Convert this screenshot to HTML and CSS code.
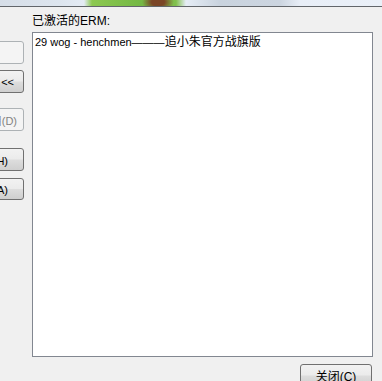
FILE: index.html
```html
<!DOCTYPE html>
<html lang="zh-CN">
<head>
  <meta charset="UTF-8">
  <title>ERM</title>
  <link rel="stylesheet" href="styles.css">
</head>
<body>

  <div class="banner"></div>

  <div class="main">
    <div class="side">
      <button class="btn btn-first" disabled>添加(I) &gt;&gt;</button>
      <button class="btn btn-back">&lt;&lt;</button>
      <button class="btn btn-dis" disabled>禁用(D)</button>
      <button class="btn btn-help">帮助(H)</button>
      <button class="btn btn-all">全部(A)</button>
    </div>

    <div class="content">
      <div class="label">已激活的ERM:</div>
      <div class="list">
        <div class="item">29 wog - henchmen———<span class="cjk">追小朱官方战旗版</span></div>
      </div>
      <div class="footer">
        <button class="btn btn-close">关闭(C)</button>
      </div>
    </div>
  </div>

</body>
</html>
```

FILE: styles.css
```css
* {
  margin: 0;
  padding: 0;
  box-sizing: border-box;
}

body {
  width: 382px;
  height: 381px;
  overflow: hidden;
  background: #f0f0f0;
  font-family: 'Liberation Sans', 'Noto Sans CJK SC', sans-serif;
  font-size: 11px;
  color: #000;
}

/* Bande d'image en haut */
.banner {
  height: 7px;
  border-bottom: 1px solid #62666b;
  background:
    radial-gradient(ellipse 16px 10px at 158px 2px, #7a4526 40%, rgba(122, 69, 38, 0) 100%),
    linear-gradient(90deg, rgba(0,0,0,0) 84px, #8cc850 92px, #74b844 140px, #80c04c 176px, rgba(0,0,0,0) 186px),
    linear-gradient(90deg, #d6dee8 0, #dde5ee 60px, #e4ebf4 84px, #e6edf6 186px, #c9d3de 220px, #ccd5e0 280px, #e8eef7 300px, #eaf0f8 382px);
}

.main {
  display: flex;
  gap: 8px;
}

.side {
  width: 24px;
  padding-top: 34px;
  display: flex;
  flex-direction: column;
}

.btn {
  height: 23px;
  border: 1px solid #707070;
  border-radius: 3px;
  background: linear-gradient(#f2f2f2 0%, #ebebeb 48%, #dddddd 52%, #cfcfcf 100%);
  font-family: 'Liberation Sans', 'Noto Sans CJK SC', sans-serif;
  font-size: 11px;
  color: #000;
  white-space: nowrap;
}

.btn:disabled {
  border-color: #adb2b5;
  background: #f4f4f4;
  color: #838383;
}

.side .btn {
  width: 90px;
  margin-left: -66px;
  text-align: right;
}

.btn-first { padding-right: 30px; }

.btn-back {
  margin-top: 6px;
  padding-right: 9px;
}

.btn-dis {
  margin-top: 15px;
  padding-right: 6px;
}

.btn-help {
  margin-top: 17px;
  padding-right: 15px;
}

.btn-all {
  margin-top: 7px;
  height: 22px;
  padding-right: 15px;
}

.content {
  width: 341px;
  padding-top: 6px;
}

.label {
  font-size: 12px;
  line-height: 16px;
  margin-bottom: 3px;
}

.list {
  height: 325px;
  background: #fff;
  border: 1px solid #828790;
  padding: 2px 2px;
}

.item {
  line-height: 14px;
}

.cjk {
  font-size: 12px;
}

.footer {
  display: flex;
  justify-content: flex-end;
  margin-top: 7px;
}

.btn-close {
  width: 72px;
  height: 23px;
  margin-right: 1px;
  font-size: 12px;
}
```
